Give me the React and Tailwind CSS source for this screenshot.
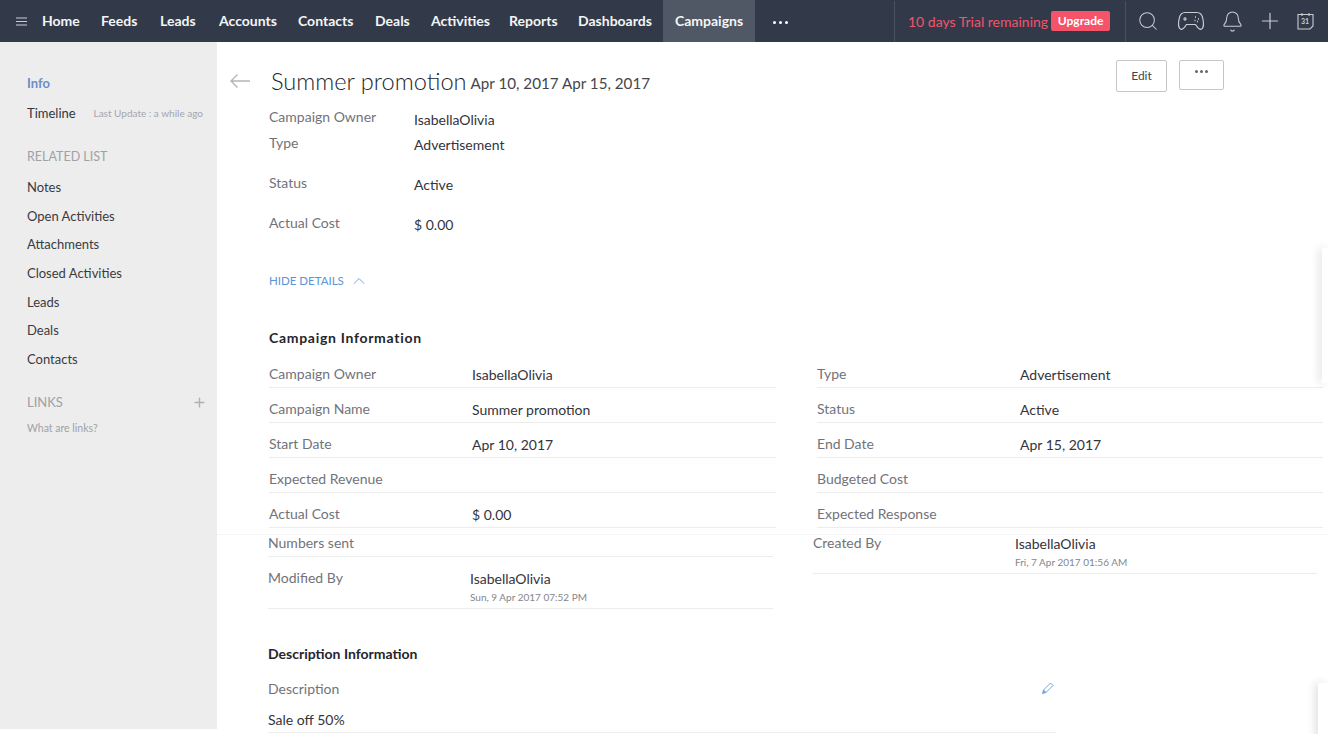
import { ChevronUp, Plus, Search, Bell } from 'lucide-react'

const navItems = [
  ['Home', 'w-[59px]'],
  ['Feeds', 'w-[59px]'],
  ['Leads', 'w-[59px]'],
  ['Accounts', 'w-[79px]'],
  ['Contacts', 'w-[77px]'],
  ['Deals', 'w-[56px]'],
  ['Activities', 'w-[78px]'],
  ['Reports', 'w-[69px]'],
  ['Dashboards', 'w-[85px]'],
]

const relatedLinks = [
  ['Notes', 'h-[29px]'],
  ['Open Activities', 'h-[29px]'],
  ['Attachments', 'h-[28px]'],
  ['Closed Activities', 'h-[29px]'],
  ['Leads', 'h-[29px]'],
  ['Deals', 'h-[28px]'],
  ['Contacts', 'h-[29px]'],
]

const leftInfo = [
  ['Campaign Owner', 'IsabellaOlivia'],
  ['Campaign Name', 'Summer promotion'],
  ['Start Date', 'Apr 10, 2017'],
  ['Expected Revenue', ''],
  ['Actual Cost', '$ 0.00'],
]

const rightInfo = [
  ['Type', 'Advertisement'],
  ['Status', 'Active'],
  ['End Date', 'Apr 15, 2017'],
  ['Budgeted Cost', ''],
  ['Expected Response', ''],
]

function GamepadIcon() {
  return (
    <svg width="28" height="20" viewBox="0 0 28 20" fill="none" stroke="#c9ccd2" strokeWidth="1.2">
      <path d="M8 1.500h12c3.500 0 5 2 5.800 6 .8 3.800 1.200 7.800-.4 9.900-1.600 1.800-3.600.6-5-1.200l-1.900-2.700H9.500l-1.900 2.700c-1.400 1.800-3.400 3-5 1.200C1 15.300 1.400 11.300 2.200 7.500 3 3.500 4.500 1.500 8 1.500z" />
      <path d="M6 8h4M8 6v4" />
      <path d="M18 6h1M21 8h1M17.500 9.500h1M20 10.500h1" strokeWidth="1.400" />
    </svg>
  )
}

function CalendarIcon() {
  return (
    <svg width="17" height="18" viewBox="0 0 17 18" fill="none" stroke="#c9ccd2" strokeWidth="1.100">
      <path d="M1 2.500h15v11.500l-3 3H1z" />
      <path d="M5 1v3M12 1v3" />
      <text x="8" y="12" textAnchor="middle" fontSize="7" fontWeight="700" fill="#c9ccd2" stroke="none" fontFamily="Lato, sans-serif">31</text>
    </svg>
  )
}

function BackArrow() {
  return (
    <svg width="20" height="14" viewBox="0 0 20 14" fill="none" stroke="#b4b5b8" strokeWidth="1.400">
      <path d="M20 7H1M7.500.5 1 7l6.500 6.500" />
    </svg>
  )
}

function PencilIcon() {
  return (
    <svg width="13" height="13" viewBox="0 0 13 13" fill="none" stroke="#6ea8e0" strokeWidth="1">
      <path d="M9.500 1 12 3.500 5 10.500 2.500 8z" />
      <path d="M2.500 8 1.500 11.500l3.500-1" fill="#6ea8e0" />
    </svg>
  )
}

function InfoRow({ label, value }) {
  return (
    <div className="flex h-[35px] border-b border-[#ececec]">
      <div className="w-[203px] pt-[12px] text-[14px] leading-[17px] text-[#72737a]">{label}</div>
      <div className="pt-[13px] text-[14px] leading-[17px] text-[#33343c]">{value}</div>
    </div>
  )
}

export default function App() {
  return (
    <div className="relative h-[734px] w-[1328px] overflow-hidden bg-white font-['Lato',sans-serif]">
      <header className="flex h-[42px] items-center bg-[#323a4a] text-white">
        <button className="flex w-[42px] justify-center">
          <svg width="11" height="9" viewBox="0 0 11 9" stroke="#c9ccd2" strokeWidth="1.200">
            <path d="M0 1h11M0 4.500h11M0 8h11" />
          </svg>
        </button>
        <nav className="flex h-full items-center text-[14px] font-bold text-[#f4f5f6]">
          {navItems.map(([name, width]) => (
            <span key={name} className={`${width} pb-[1px]`}>{name}</span>
          ))}
          <span className="flex h-full w-[92px] items-center justify-center bg-[#505765] pb-[1px]">Campaigns</span>
          <span className="ml-[18px] mt-[3px] flex gap-[3px]">
            <i className="h-[3px] w-[3px] rounded-full bg-white" />
            <i className="h-[3px] w-[3px] rounded-full bg-white" />
            <i className="h-[3px] w-[3px] rounded-full bg-white" />
          </span>
        </nav>
        <div className="ml-[106px] flex h-[41px] items-center border-l border-[#4a5160] pl-[13px] pr-[15px]">
          <span className="text-[14px] text-[#f4536a]">10 days Trial remaining</span>
          <span className="ml-[3px] flex h-[20px] w-[59px] items-center justify-center rounded-[2px] bg-[#f4536a] text-[12px] font-bold text-white">Upgrade</span>
        </div>
        <div className="flex h-[41px] flex-1 items-center border-l border-[#4a5160] pl-[11px]">
          <Search size={22} strokeWidth={1.100} className="text-[#c9ccd2]" />
          <span className="ml-[18px] flex"><GamepadIcon /></span>
          <Bell size={23} strokeWidth={1.100} className="ml-[16px] text-[#c9ccd2]" />
          <Plus size={26} strokeWidth={1.100} className="ml-[13px] text-[#c9ccd2]" />
          <span className="ml-[14px] flex"><CalendarIcon /></span>
        </div>
      </header>

      <div className="flex">
        <aside className="h-[687px] w-[217px] shrink-0 bg-[#ededed] pl-[27px] pr-[10px] pt-[33px] text-[13px]">
          <div className="h-[17px] font-bold leading-[17px] text-[#6a8fc7]">Info</div>
          <div className="mt-[13px] flex h-[17px] items-center justify-between pr-[4px] leading-[17px] text-[#33343c]">
            <span>Timeline</span>
            <span className="text-[10px] text-[#a5a6ab]">Last Update : a while ago</span>
          </div>
          <div className="mt-[26px] text-[12.5px] leading-[17px] text-[#a0a1a6]">RELATED LIST</div>
          <ul className="mt-[8px] text-[#3a3b42]">
            {relatedLinks.map(([name, height]) => (
              <li key={name} className={`flex items-center ${height}`}>{name}</li>
            ))}
          </ul>
          <div className="mt-[20px] flex items-center justify-between leading-[17px] text-[#a0a1a6]">
            <span>LINKS</span>
            <Plus size={15} strokeWidth={2.200} className="text-[#b0b1b5]" />
          </div>
          <div className="mt-[10px] text-[10.500px] leading-[14px] text-[#a0a1a6]">What are links?</div>
        </aside>

        <main className="min-w-0 flex-1">
          <div className="h-[492px] pl-[52px]">
            <div className="relative flex h-[61px] items-end pb-[8px]">
              <span className="absolute left-[-39px] top-[32px] flex"><BackArrow /></span>
              <h1 className="ml-[2px] text-[23.600px] font-light leading-[28px] text-[#24252c]">Summer promotion</h1>
              <span className="ml-[4px] text-[15.200px] leading-[24px] text-[#44454c]">Apr 10, 2017 Apr 15, 2017</span>
              <button className="absolute left-[847px] top-[18px] h-[32px] w-[51px] rounded-[2px] border border-[#c6c6c6] text-[12px] text-[#44454c]">Edit</button>
              <button className="absolute left-[910px] top-[18px] flex h-[30px] w-[45px] justify-center gap-[2px] rounded-[2px] border border-[#c6c6c6] pt-[9px]">
                <i className="h-[3px] w-[3px] rounded-full bg-[#666]" />
                <i className="h-[3px] w-[3px] rounded-full bg-[#666]" />
                <i className="h-[3px] w-[3px] rounded-full bg-[#666]" />
              </button>
            </div>

            <div className="text-[14px] leading-[17px]">
              <div className="flex h-[26px] pt-[5px]">
                <span className="w-[145px] text-[#72737a]">Campaign Owner</span>
                <span className="pt-[3px] text-[#33343c]">IsabellaOlivia</span>
              </div>
              <div className="flex h-[40px] pt-[5px]">
                <span className="w-[145px] text-[#72737a]">Type</span>
                <span className="pt-[2px] text-[#33343c]">Advertisement</span>
              </div>
              <div className="flex h-[40px] pt-[5px]">
                <span className="w-[145px] text-[#72737a]">Status</span>
                <span className="pt-[2px] text-[#33343c]">Active</span>
              </div>
              <div className="flex h-[40px] pt-[5px]">
                <span className="w-[145px] text-[#72737a]">Actual Cost</span>
                <span className="pt-[2px] text-[#33343c]">$ 0.00</span>
              </div>
            </div>

            <div className="mt-[23px] flex h-[17px] items-center text-[11.500px] text-[#5a95d6]">
              HIDE DETAILS
              <ChevronUp size={20} strokeWidth={1} className="ml-[5px]" />
            </div>

            <h2 className="mt-[40px] text-[14px] font-bold leading-[17px] tracking-[0.7px] text-[#24252c]">Campaign Information</h2>

            <div className="mt-[7px] grid w-[1054px] grid-cols-[507px_506px] gap-x-[41px]">
              <div>
                {leftInfo.map(([label, value]) => (
                  <InfoRow key={label} label={label} value={value} />
                ))}
              </div>
              <div>
                {rightInfo.map(([label, value]) => (
                  <InfoRow key={label} label={label} value={value} />
                ))}
              </div>
            </div>
          </div>

          <div className="border-t border-[#f5f5f5] pl-[51px] text-[14px] leading-[17px]">
            <div className="grid w-[1049px] grid-cols-[505px_504px] gap-x-[40px]">
              <div>
                <div className="h-[22px] border-b border-[#ececec] leading-[15px] text-[#72737a]">Numbers sent</div>
                <div className="flex h-[52px] border-b border-[#ececec] pt-[12px]">
                  <span className="w-[202px] text-[#72737a]">Modified By</span>
                  <div className="pt-[1px]">
                    <div className="text-[#33343c]">IsabellaOlivia</div>
                    <div className="mt-[3px] text-[10px] leading-[14px] text-[#85868c]">Sun, 9 Apr 2017 07:52 PM</div>
                  </div>
                </div>
              </div>
              <div className="flex h-[39px] border-b border-[#ececec]">
                <span className="w-[202px] leading-[15px] text-[#72737a]">Created By</span>
                <div>
                  <div className="text-[#33343c]">IsabellaOlivia</div>
                  <div className="mt-[3px] text-[10px] leading-[14px] text-[#85868c]">Fri, 7 Apr 2017 01:56 AM</div>
                </div>
              </div>
            </div>

            <h2 className="mt-[36px] text-[14px] font-bold leading-[17px] text-[#24252c]">Description Information</h2>

            <div className="mt-[18px] w-[788px] border-b border-[#ececec]">
              <div className="flex items-center justify-between pr-[2px] text-[#72737a]">
                <span>Description</span>
                <PencilIcon />
              </div>
              <div className="mt-[14px] h-[21px] text-[#33343c]">Sale off 50%</div>
            </div>
          </div>
        </main>
      </div>

      {/* panels peeking in from the right edge */}
      <div className="absolute right-0 top-[248px] h-[135px] w-[6px] bg-white shadow-[-3px_0_8px_rgba(0,0,0,0.12)]" />
      <div className="absolute right-0 top-[683px] h-[60px] w-[10px] bg-white shadow-[-3px_0_8px_rgba(0,0,0,0.12)]" />
    </div>
  )
}
